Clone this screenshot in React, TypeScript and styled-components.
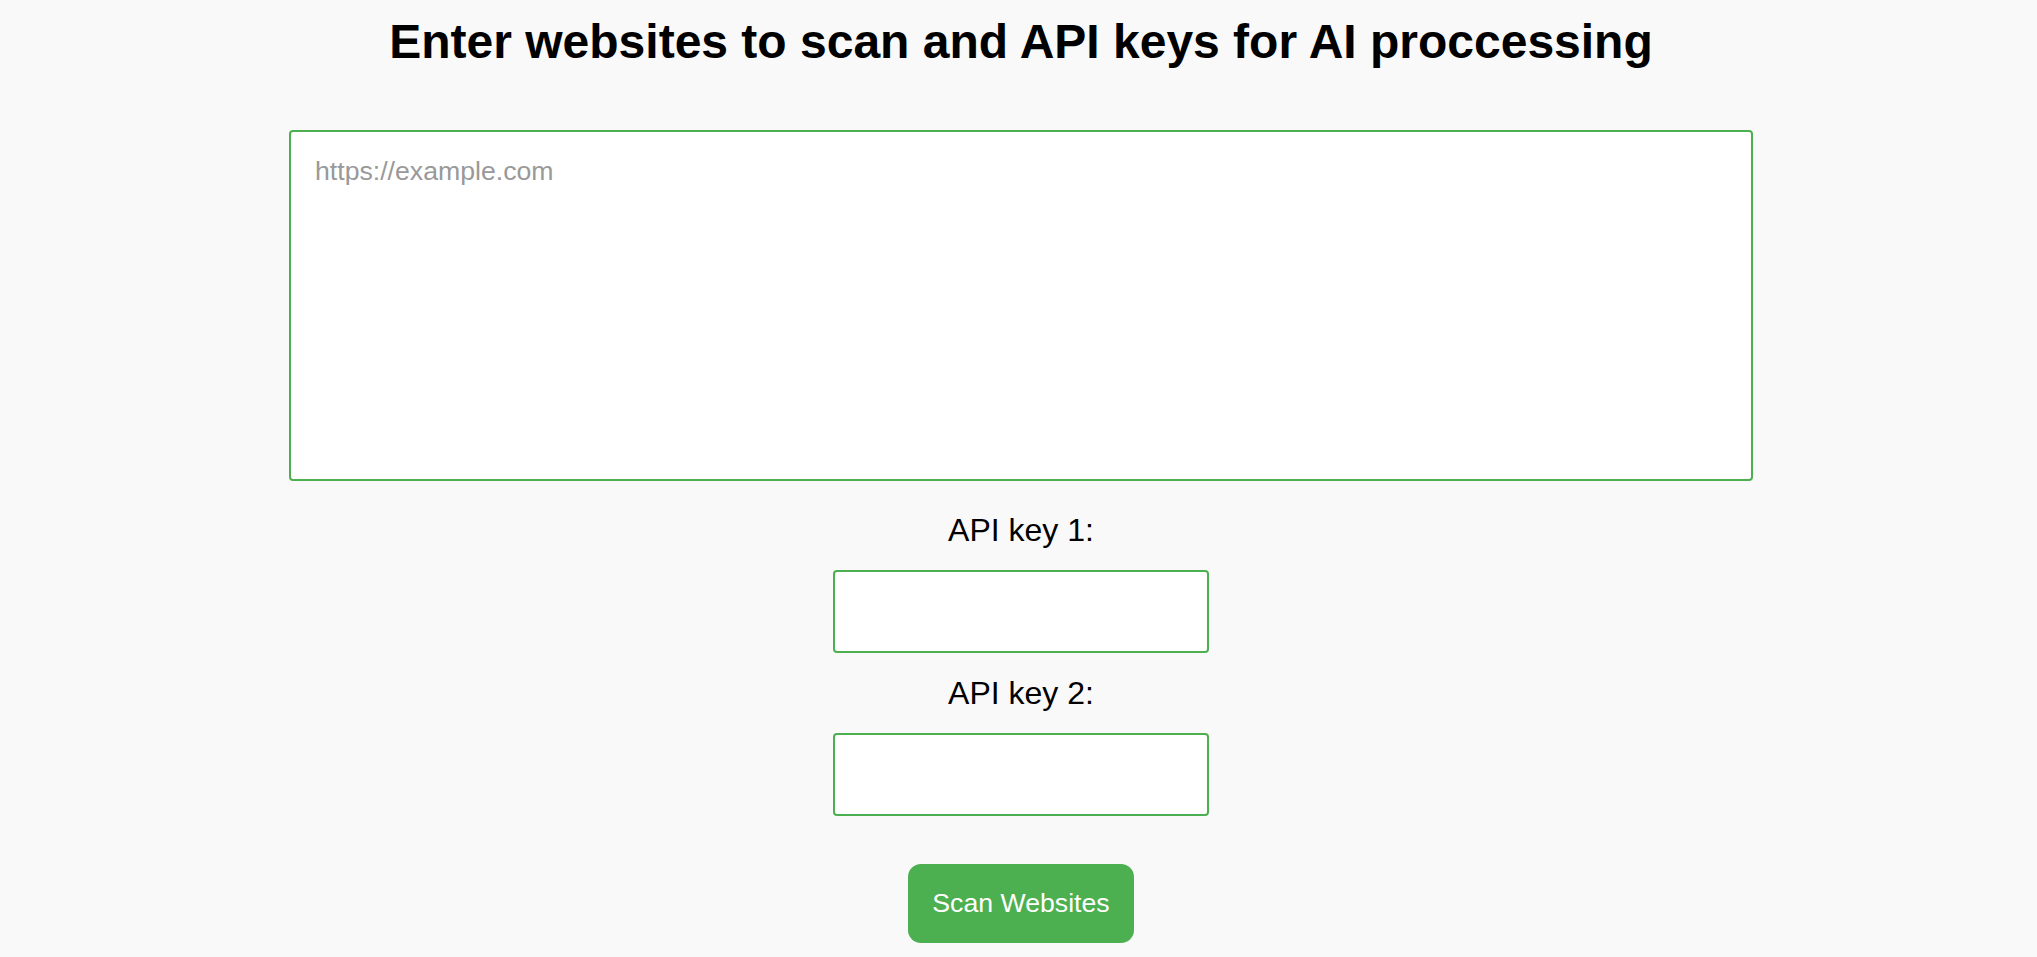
import React from "react";
import styled, { createGlobalStyle } from "styled-components";

const GlobalStyle = createGlobalStyle`
  html, body {
    margin: 0;
    padding: 0;
    background: #f9f9f9;
  }
  body {
    font-family: "Liberation Sans", Arial, sans-serif;
  }
  * {
    box-sizing: border-box;
  }
`;

const Page = styled.main`
  display: flex;
  flex-direction: column;
  align-items: center;
  padding: 14px 0 0 5px;
  min-height: 957px;
  font-family: "Liberation Sans", Arial, sans-serif;
`;

const Title = styled.h1`
  margin: 0 0 60px;
  font-size: 48px;
  line-height: 56px;
  font-weight: 700;
  color: #000;
  text-align: center;
`;

const Form = styled.form`
  display: flex;
  flex-direction: column;
  align-items: center;
`;

const UrlArea = styled.textarea`
  display: block;
  width: 1464px;
  height: 351px;
  margin: 0 0 9px;
  padding: 24px;
  border: 2px solid #4caf50;
  border-radius: 4px;
  background: #fff;
  font-family: "Liberation Sans", Arial, sans-serif;
  font-size: 26.67px;
  color: #000;
  resize: none;
  outline: none;

  &::placeholder {
    color: #999;
  }
`;

const Label = styled.label`
  display: block;
  margin: 22px 0 21px;
  font-size: 32px;
  line-height: 37px;
  color: #000;
  text-align: center;
`;

const KeyInput = styled.input`
  display: block;
  width: 376px;
  height: 83px;
  padding: 0 16px;
  border: 2px solid #4caf50;
  border-radius: 4px;
  background: #fff;
  font-family: "Liberation Sans", Arial, sans-serif;
  font-size: 26.67px;
  outline: none;
`;

const ScanButton = styled.button`
  display: flex;
  align-items: center;
  justify-content: center;
  margin-top: 48px;
  width: 226px;
  height: 79px;
  padding: 0;
  border: none;
  border-radius: 13px;
  background: #4caf50;
  color: #fff;
  font-family: "Liberation Sans", Arial, sans-serif;
  font-size: 26.67px;
  line-height: 31px;
  white-space: nowrap;
  cursor: pointer;
`;

export default function App() {
  return (
    <>
      <GlobalStyle />
      <Page>
        <Title>Enter websites to scan and API keys for AI proccessing</Title>
        <Form onSubmit={(e) => e.preventDefault()}>
          <UrlArea placeholder="https://example.com" />
          <Label htmlFor="key1">API key 1:</Label>
          <KeyInput id="key1" type="text" />
          <Label htmlFor="key2">API key 2:</Label>
          <KeyInput id="key2" type="text" />
          <ScanButton type="submit">Scan Websites</ScanButton>
        </Form>
      </Page>
    </>
  );
}
